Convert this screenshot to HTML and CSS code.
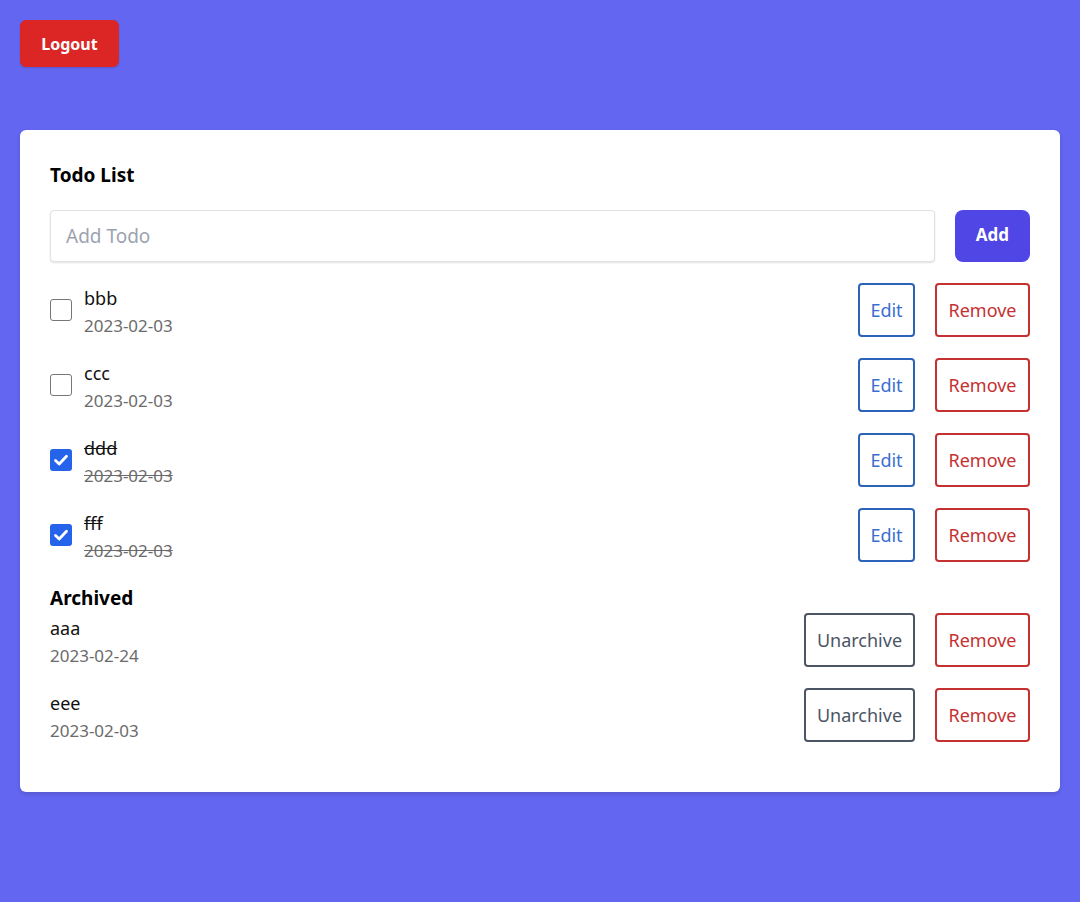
FILE: index.html
```html
<!DOCTYPE html>
<html>
<head>
<meta charset="utf-8">
<link rel="stylesheet" href="styles.css">
</head>
<body>
<div class="page">
  <div class="top"><button class="logout">Logout</button></div>
  <div class="card">
    <h2 class="title">Todo List</h2>
    <div class="add-row">
      <input class="add-input" placeholder="Add Todo">
      <button class="add-btn">Add</button>
    </div>
    <div class="list">
      <div class="item">
        <span class="check"></span>
        <div class="text"><div class="name">bbb</div><div class="date">2023-02-03</div></div>
        <div class="actions"><button class="btn edit">Edit</button><button class="btn remove">Remove</button></div>
      </div>
      <div class="item">
        <span class="check"></span>
        <div class="text"><div class="name">ccc</div><div class="date">2023-02-03</div></div>
        <div class="actions"><button class="btn edit">Edit</button><button class="btn remove">Remove</button></div>
      </div>
      <div class="item done">
        <span class="check on"><svg viewBox="0 0 22 22" width="22" height="22"><path d="M5.5 11.5 L9.2 15 L16.5 7.2" fill="none" stroke="#fff" stroke-width="2.8" stroke-linecap="round" stroke-linejoin="round"/></svg></span>
        <div class="text"><div class="name">ddd</div><div class="date">2023-02-03</div></div>
        <div class="actions"><button class="btn edit">Edit</button><button class="btn remove">Remove</button></div>
      </div>
      <div class="item done">
        <span class="check on"><svg viewBox="0 0 22 22" width="22" height="22"><path d="M5.5 11.5 L9.2 15 L16.5 7.2" fill="none" stroke="#fff" stroke-width="2.8" stroke-linecap="round" stroke-linejoin="round"/></svg></span>
        <div class="text"><div class="name">fff</div><div class="date">2023-02-03</div></div>
        <div class="actions"><button class="btn edit">Edit</button><button class="btn remove">Remove</button></div>
      </div>
    </div>
    <h3 class="archived-title">Archived</h3>
    <div class="list">
      <div class="item">
        <div class="text"><div class="name">aaa</div><div class="date">2023-02-24</div></div>
        <div class="actions"><button class="btn unarchive">Unarchive</button><button class="btn remove">Remove</button></div>
      </div>
      <div class="item">
        <div class="text"><div class="name">eee</div><div class="date">2023-02-03</div></div>
        <div class="actions"><button class="btn unarchive">Unarchive</button><button class="btn remove">Remove</button></div>
      </div>
    </div>
  </div>
</div>
</body>
</html>
```
FILE: styles.css
```css
* { box-sizing: border-box; }
html, body { margin: 0; padding: 0; }
body {
  background: #6366f1;
  font-family: "Noto Sans", "Open Sans", sans-serif;
  color: #111;
}
.page { padding: 20px; }
.top { height: 110px; }
.logout {
  width: 99px;
  height: 47px;
  background: #dc2626;
  color: #fff;
  border: none;
  border-radius: 6px;
  font-family: "Noto Sans", sans-serif;
  font-weight: 700;
  font-size: 16px;
  box-shadow: 0 1px 2px rgba(0,0,0,0.15);
  padding: 0;
}
.card {
  background: #fff;
  border-radius: 6px;
  padding: 30px 30px 50px;
  box-shadow: 0 2px 4px rgba(0,0,0,0.15);
}
.title {
  margin: 0 0 20px;
  font-size: 19px;
  line-height: 30px;
  font-weight: 700;
  color: #000;
}
.add-row {
  display: flex;
  gap: 20px;
  margin-bottom: 21px;
}
.add-input {
  flex: 1;
  height: 52px;
  border: 1px solid #e2e2e2;
  border-radius: 4px;
  box-shadow: 0 1px 2px rgba(0,0,0,0.12);
  padding: 0 15px;
  font-family: inherit;
  font-size: 19px;
  outline: none;
}
.add-input::placeholder { color: #9ca3af; }
.add-btn {
  width: 75px;
  height: 52px;
  background: #4f46e5;
  color: #fff;
  border: none;
  border-radius: 8px;
  font-family: "Noto Sans", sans-serif;
  font-weight: 700;
  font-size: 17px;
  padding: 0 0 4px;
}
.list {
  display: flex;
  flex-direction: column;
  gap: 21px;
}
.item {
  display: flex;
  align-items: center;
  height: 54px;
}
.check {
  width: 22px;
  height: 22px;
  border: 1.5px solid #767676;
  border-radius: 3px;
  margin-right: 12px;
  flex: none;
  display: block;
}
.check.on {
  background: #2563eb;
  border: none;
}
.check svg { display: block; }
.text { flex: 1; padding-top: 2px; }
.name {
  font-size: 18px;
  line-height: 28px;
  color: #111;
}
.date {
  font-size: 17px;
  line-height: 27px;
  color: #6b6b6b;
}
.done .name, .done .date { text-decoration: line-through; }
.actions {
  display: flex;
  gap: 20px;
}
.btn {
  height: 54px;
  background: #fff;
  border: 2px solid;
  border-radius: 4px;
  font-family: inherit;
  font-size: 18px;
  padding: 0;
}
.edit { border-color: #2b63b8; color: #3b6ed0; width: 57px; }
.remove { border-color: #c53030; color: #c53030; width: 95px; }
.unarchive { border-color: #4b5563; color: #4b5563; width: 111px; }
.archived-title {
  margin: 21px 0 0;
  font-size: 19px;
  line-height: 30px;
  font-weight: 700;
  color: #000;
}
```
